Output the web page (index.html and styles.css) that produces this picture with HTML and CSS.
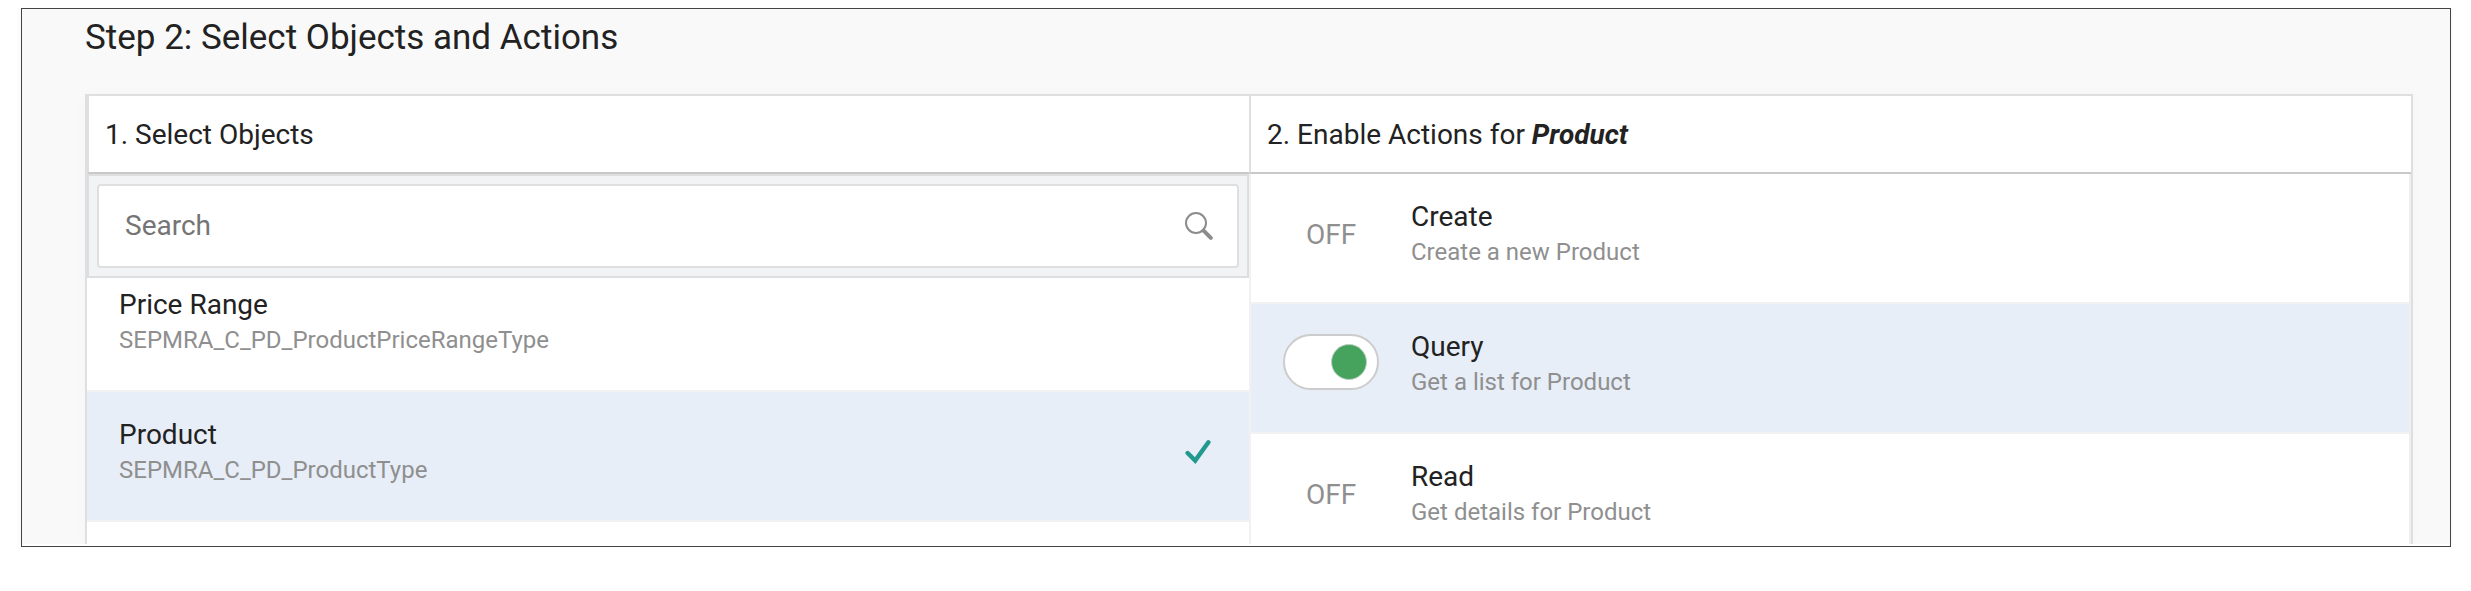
FILE: index.html
```
<!DOCTYPE html>
<html lang="en">
<head>
<meta charset="utf-8">
<title>Select Objects and Actions</title>
<link rel="stylesheet" href="styles.css">
</head>
<body>
<main class="frame">
  <div class="page">
    <h1 class="title">Step 2: Select Objects and Actions</h1>
    <div class="panel">
      <section class="pane objects">
        <h2 class="pane-head">1. Select Objects</h2>
        <form class="toolbar" role="search">
          <div class="field">
            <input class="search" type="search" placeholder="Search" aria-label="Search">
            <button class="search-btn" type="button" aria-label="Search">
              <svg width="28" height="28" viewBox="0 0 28 28" fill="none" stroke="#8c8c8c">
                <circle cx="11" cy="11" r="10" stroke-width="2"/>
                <path d="M18.6 18.6 25.8 25.8" stroke-width="4" stroke-linecap="round"/>
              </svg>
            </button>
          </div>
        </form>
        <ul class="list scrolled">
          <li class="row">
            <div class="text"><span class="name">Price Range</span><span class="desc">SEPMRA_C_PD_ProductPriceRangeType</span></div>
          </li>
          <li class="row selected">
            <div class="text"><span class="name">Product</span><span class="desc">SEPMRA_C_PD_ProductType</span></div>
            <svg class="check" width="28" height="28" viewBox="0 0 28 28" fill="none" stroke="#22998f" stroke-width="4.4" stroke-linecap="round">
              <path d="M2.6 15 10.2 22.6 23.4 4.2"/>
            </svg>
          </li>
          <li class="row"></li>
        </ul>
      </section>
      <section class="pane actions">
        <h2 class="pane-head">2. Enable Actions for <em>Product</em></h2>
        <ul class="list">
          <li class="row">
            <input class="switch" type="checkbox" id="create">
            <label class="text" for="create"><span class="name">Create</span><span class="desc">Create a new Product</span></label>
          </li>
          <li class="row selected">
            <input class="switch" type="checkbox" id="query" checked>
            <label class="text" for="query"><span class="name">Query</span><span class="desc">Get a list for Product</span></label>
          </li>
          <li class="row">
            <input class="switch" type="checkbox" id="read">
            <label class="text" for="read"><span class="name">Read</span><span class="desc">Get details for Product</span></label>
          </li>
        </ul>
      </section>
    </div>
  </div>
</main>
</body>
</html>
```
FILE: styles.css
```
*,
*::before {
  box-sizing: border-box;
}

body {
  display: flex;
  height: 100vh;
  margin: 0;
  padding: 8px 20px 44px 21px;
  background: #fff;
  color: #222;
  font-family: Roboto, "Noto Sans", sans-serif;
  font-size: 28px;
  line-height: 36px;
}

.frame {
  display: flex;
  flex: 1;
  min-width: 0;
  padding-bottom: 2px;
  border: 1px solid #444;
  box-shadow: -4px 0 #fcfcfc, 2px 0 #fcfcfc;
}

.page {
  display: flex;
  flex: 1;
  flex-direction: column;
  min-width: 0;
  padding: 9px 37px 0 63px;
  overflow: hidden;
  background: #f9f9f9;
}

.title {
  margin: 0 0 36px;
  font-size: 35px;
  font-weight: 400;
  line-height: 40px;
}

.panel {
  display: grid;
  flex: 1;
  grid-template-columns: 1fr 1fr;
  min-height: 0;
  border: 2px solid #dfdfdf;
  border-bottom: 0;
  background: #fff;
  box-shadow: 0 0 16px rgba(0, 0, 0, 0.02);
}

.pane {
  display: flex;
  flex-direction: column;
  min-width: 0;
  min-height: 0;
}

.pane-head {
  flex: none;
  margin: 0;
  padding: 2px 16px 0;
  border-bottom: 2px solid #c9c9c9;
  border-left: 2px solid #dfdfdf;
  font-size: 28px;
  font-weight: 400;
  line-height: 74px;
}

.pane-head em {
  font-weight: 700;
}

.toolbar {
  flex: none;
  margin: 0;
  padding: 8px;
  border: 2px solid #dcdee0;
  background: #f2f3f5;
}

.field {
  display: flex;
  align-items: center;
  height: 84px;
  padding: 0 24px 0 26px;
  border: 2px solid #dfdfdf;
  border-radius: 4px;
  background: #fff;
}

.search {
  flex: 1;
  min-width: 0;
  padding: 0;
  border: 0;
  outline: 0;
  background: none;
  color: #222;
  font: inherit;
  appearance: none;
}

.search::placeholder {
  color: #757575;
  opacity: 1;
}

.search-btn {
  display: flex;
  padding: 0;
  border: 0;
  background: none;
}

.list {
  flex: 1;
  min-height: 0;
  margin: 0;
  padding: 0;
  overflow: hidden;
  list-style: none;
}

.scrolled .row:first-child {
  margin-top: -16px;
}

.actions .list {
  border-right: 2px solid #efefef;
  border-left: 2px solid #f1f1f1;
}

.row {
  display: flex;
  gap: 32px;
  min-height: 130px;
  padding: 25px 36px 33px 32px;
  border-bottom: 2px solid #f1f1f1;
}

.selected {
  background: #e7eef7;
}

.text {
  flex: 1;
  min-width: 0;
}

.name,
.desc {
  display: block;
}

.desc {
  color: #8f8f8f;
  font-size: 24px;
  line-height: 34px;
}

.check {
  flex: none;
  align-self: center;
}

.switch {
  display: flex;
  flex: none;
  align-items: center;
  justify-content: center;
  width: 96px;
  height: 56px;
  margin: 5px 0 0;
  padding-top: 5px;
  color: #8f8f8f;
  font: inherit;
  appearance: none;
}

.switch::before {
  content: "OFF";
}

.switch:checked {
  justify-content: flex-end;
  padding: 0 10px 0 0;
  border: 2px solid #ccc;
  border-radius: 28px;
  background: #fff;
}

.switch:checked::before {
  content: "";
  width: 36px;
  height: 36px;
  border: 1px solid #bfcfc4;
  border-radius: 50%;
  background: #46a35e;
}
```
